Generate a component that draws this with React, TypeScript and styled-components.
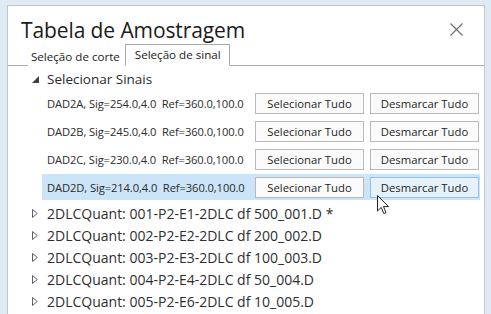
import styled, { createGlobalStyle } from 'styled-components';

const GlobalStyle = createGlobalStyle`
  html, body {
    margin: 0;
    padding: 0;
    background: #dfeaf4;
    font-family: 'Open Sans', 'Noto Sans', sans-serif;
    overflow: hidden;
  }
`;

const signals = [
	{ name: 'DAD2A', sig: '254.0,4.0', ref: '360.0,100.0' },
	{ name: 'DAD2B', sig: '245.0,4.0', ref: '360.0,100.0' },
	{ name: 'DAD2C', sig: '230.0,4.0', ref: '360.0,100.0' },
	{ name: 'DAD2D', sig: '214.0,4.0', ref: '360.0,100.0' },
];

const files = [
	'2DLCQuant: 001-P2-E1-2DLC df 500_001.D *',
	'2DLCQuant: 002-P2-E2-2DLC df 200_002.D',
	'2DLCQuant: 003-P2-E3-2DLC df 100_003.D',
	'2DLCQuant: 004-P2-E4-2DLC df 50_004.D',
	'2DLCQuant: 005-P2-E6-2DLC df 10_005.D',
];

export default function App(){
	return(
		<>
			<GlobalStyle />
			<Window>
				<Header>
					<Title>Tabela de Amostragem</Title>
					<Close aria-label='Fechar'>
						<svg width='13' height='13' viewBox='0 0 13 13'>
							<path d='M0.5 0.5 L12.5 12.5 M12.5 0.5 L0.5 12.5' stroke='#6b6b6b' strokeWidth='1.1' fill='none' />
						</svg>
					</Close>
				</Header>
				<TabStrip>
					<Tab>Seleção de corte</Tab>
					<Tab active>Seleção de sinal</Tab>
				</TabStrip>
				<Tree>
					<NodeHeader>
						<Expander>
							<svg width='7' height='7' viewBox='0 0 7 7'>
								<path d='M7 0 L7 7 L0 7 Z' fill='#404040' />
							</svg>
						</Expander>
						<NodeLabel>Selecionar Sinais</NodeLabel>
					</NodeHeader>
					{signals.map((s, i) => (
						<SignalRow key={s.name} selected={i === 3}>
							<RowLabel>{s.name}, Sig={s.sig}&nbsp;&nbsp;Ref={s.ref}</RowLabel>
							<Buttons>
								<RowButton>Selecionar Tudo</RowButton>
								<RowButton hovered={i === 3}>Desmarcar Tudo</RowButton>
							</Buttons>
						</SignalRow>
					))}
					{files.map(f => (
						<FileItem key={f}>
							<Expander>
								<svg width='6' height='9' viewBox='0 0 6 9'>
									<path d='M0.5 0.5 L5.3 4.5 L0.5 8.5 Z' fill='none' stroke='#606060' strokeWidth='1' />
								</svg>
							</Expander>
							<FileLabel>{f}</FileLabel>
						</FileItem>
					))}
				</Tree>
				<Cursor>
					<svg width='13' height='20' viewBox='0 0 13 20'>
						<path d='M0.5 0.5 L0.5 16 L4.2 12.4 L6.8 18.6 L9 17.6 L6.5 11.6 L11.6 11.6 Z' fill='#fff' stroke='#222' strokeWidth='1' strokeLinejoin='round' />
					</svg>
				</Cursor>
			</Window>
		</>
	);
}

const Window = styled.div`
  position: relative;
  margin: 5px 0 0 7px;
  width: 478px;
  height: 320px;
  background: #fff;
  border: 1px solid #c4c4c4;
  border-bottom: none;
  box-sizing: border-box;
`;

const Header = styled.div`
  display: flex;
  align-items: center;
  justify-content: space-between;
  box-sizing: border-box;
  height: 38px;
  padding: 9px 21px 0 13px;
`;

const Title = styled.h1`
  margin: 0;
  font-size: 21px;
  font-weight: 400;
  color: #1b1b1b;
  letter-spacing: -0.1px;
`;

const Close = styled.button`
  display: flex;
  padding: 0;
  border: none;
  background: none;
`;

const TabStrip = styled.div`
  display: flex;
  align-items: flex-end;
  height: 21px;
  padding-left: 20px;
  border-bottom: 1px solid #ababab;
`;

const Tab = styled.div<{ active?: boolean }>`
  font-size: 11.6px;
  color: #1b1b1b;
  line-height: 16px;
  box-sizing: border-box;
  height: ${props => props.active ? '22px' : '19px'};
  margin-bottom: -1px;
  padding: ${props => props.active ? '2px 8px 0 9px' : '1px 4px 0 2px'};
  background: #fff;
  border: 1px solid ${props => props.active ? '#ababab' : 'transparent'};
  border-bottom: ${props => props.active ? '1px solid #fff' : 'none'};
`;

const Tree = styled.div`
  padding: 2px 0 0 20px;
`;

const NodeHeader = styled.div`
  display: flex;
  align-items: center;
  height: 22px;
`;

const Expander = styled.span`
  display: flex;
  justify-content: center;
  width: 14px;
  margin-right: 5px;
`;

const NodeLabel = styled.span`
  font-size: 13.5px;
  color: #2a2a2a;
`;

const SignalRow = styled.div<{ selected?: boolean }>`
  display: flex;
  align-items: center;
  justify-content: space-between;
  height: 26px;
  margin: 0 4px 2px 14px;
  padding: 0 1px 0 5px;
  background: ${props => props.selected ? '#cce4f7' : 'transparent'};
`;

const RowLabel = styled.span`
  font-size: 11.2px;
  color: #2b2b2b;
  white-space: nowrap;
  letter-spacing: -0.1px;
`;

const Buttons = styled.div`
  display: flex;
  gap: 6px;
`;

const RowButton = styled.button<{ hovered?: boolean }>`
  width: 109px;
  height: 21px;
  padding: 0;
  font-family: inherit;
  font-size: 11.3px;
  color: #1e1e1e;
  background: ${props => props.hovered ? '#e5f1fb' : '#fbfbfb'};
  border: 1px solid ${props => props.hovered ? '#8fc2ee' : '#b9b9b9'};
`;

const FileItem = styled.div`
  display: flex;
  align-items: center;
  height: 22px;
`;

const FileLabel = styled.span`
  font-size: 14px;
  color: #2e2e2e;
  white-space: nowrap;
`;

const Cursor = styled.div`
  position: absolute;
  left: 369px;
  top: 189px;
  pointer-events: none;
`;
